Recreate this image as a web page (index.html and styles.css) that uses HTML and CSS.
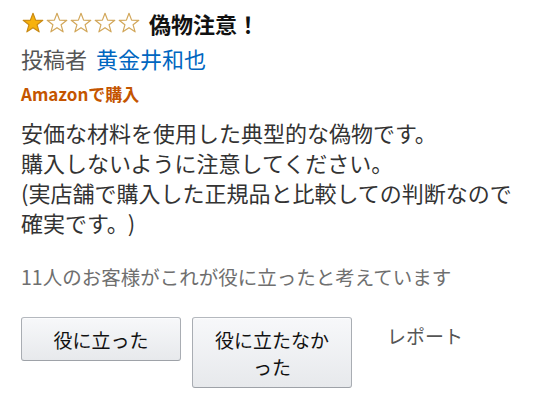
FILE: index.html
```html
<!DOCTYPE html>
<html lang="ja">
<head>
<meta charset="utf-8">
<link rel="stylesheet" href="styles.css">
</head>
<body>
<div class="review">
  <div class="header">
    <div class="stars">
      <svg class="star" viewBox="0 0 24 24"><path class="full" d="M12 2.3L14.6 9.1L21.8 9.3L16.1 13.8L18.1 20.8L12 16.7L5.9 20.8L7.9 13.8L2.2 9.3L9.4 9.1Z"/></svg>
      <svg class="star" viewBox="0 0 24 24"><path class="empty" d="M12 2.3L14.6 9.1L21.8 9.3L16.1 13.8L18.1 20.8L12 16.7L5.9 20.8L7.9 13.8L2.2 9.3L9.4 9.1Z"/></svg>
      <svg class="star" viewBox="0 0 24 24"><path class="empty" d="M12 2.3L14.6 9.1L21.8 9.3L16.1 13.8L18.1 20.8L12 16.7L5.9 20.8L7.9 13.8L2.2 9.3L9.4 9.1Z"/></svg>
      <svg class="star" viewBox="0 0 24 24"><path class="empty" d="M12 2.3L14.6 9.1L21.8 9.3L16.1 13.8L18.1 20.8L12 16.7L5.9 20.8L7.9 13.8L2.2 9.3L9.4 9.1Z"/></svg>
      <svg class="star" viewBox="0 0 24 24"><path class="empty" d="M12 2.3L14.6 9.1L21.8 9.3L16.1 13.8L18.1 20.8L12 16.7L5.9 20.8L7.9 13.8L2.2 9.3L9.4 9.1Z"/></svg>
    </div>
    <span class="title">偽物注意！</span>
  </div>
  <div class="byline">投稿者 <span class="author">黄金井和也</span></div>
  <div class="badge">Amazonで購入</div>
  <p class="body">安価な材料を使用した典型的な偽物です。<br>購入しないように注意してください。<br>(実店舗で購入した正規品と比較しての判断なので<br>確実です。<span class="paren">)</span></p>
  <div class="helpful">11人のお客様がこれが役に立ったと考えています</div>
  <div class="actions">
    <button class="btn btn-yes">役に立った</button>
    <button class="btn btn-no">役に立たなかった</button>
    <span class="report">レポート</span>
  </div>
</div>
</body>
</html>
```

FILE: styles.css
```css
html, body {
  margin: 0;
  padding: 0;
  background: #ffffff;
}
body {
  font-family: "Noto Sans CJK JP", "Noto Sans", sans-serif;
  color: #333333;
}
.review {
  padding: 8px 0 0 21px;
}
.header {
  display: flex;
  align-items: center;
  height: 30px;
}
.stars {
  display: flex;
}
.star {
  display: block;
  width: 24px;
  height: 24px;
}
.star .full {
  fill: #f7b20c;
  stroke: #c98a14;
  stroke-width: 1.2;
  stroke-linejoin: round;
}
.star .empty {
  fill: #ffffff;
  stroke: #d2a75a;
  stroke-width: 1.2;
  stroke-linejoin: round;
}
.title {
  margin-left: 8px;
  font-size: 22px;
  font-weight: bold;
  color: #111111;
  line-height: 30px;
}
.byline {
  margin-top: 5px;
  font-size: 22px;
  line-height: 30px;
  color: #555555;
}
.author {
  margin-left: 4px;
  color: #0066c0;
}
.badge {
  margin-top: 11px;
  font-size: 17px;
  line-height: 20px;
  font-weight: bold;
  color: #c45500;
}
.body {
  margin: 13px 0 0;
  font-size: 22px;
  line-height: 30px;
  color: #333333;
}
.paren {
  margin-left: 10px;
}
.helpful {
  margin-top: 27px;
  font-size: 19.5px;
  line-height: 26px;
  color: #6f6f6f;
}
.actions {
  margin-top: 27px;
  display: flex;
  align-items: flex-start;
}
.btn {
  width: 160px;
  margin: 0;
  padding: 8px 20px 7px;
  font-family: "Noto Sans CJK JP", "Noto Sans", sans-serif;
  font-size: 19px;
  line-height: 27px;
  color: #111111;
  background: linear-gradient(#f7f8fa, #e7e9ec);
  border: 1px solid #adb1b8;
  border-color: #b4b8be #a9adb3 #9ea2a8;
  border-radius: 3px;
  box-shadow: 0 1px 0 rgba(255,255,255,.6) inset;
  text-align: center;
}
.btn-no {
  margin-left: 11px;
}
.report {
  margin-left: 35px;
  padding-top: 5px;
  font-size: 19px;
  line-height: 27px;
  color: #555555;
}
```
